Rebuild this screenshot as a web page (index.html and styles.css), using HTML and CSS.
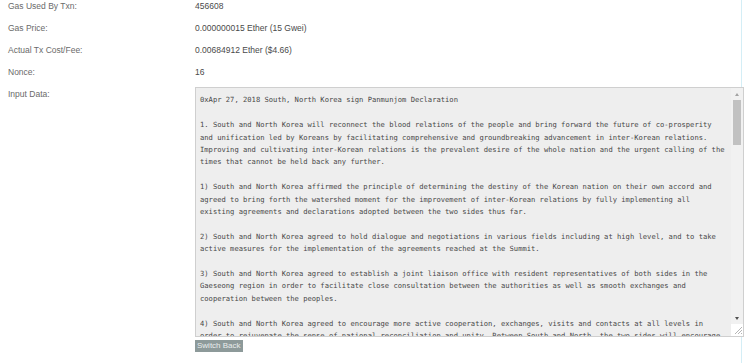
FILE: index.html
```html
<!DOCTYPE html>
<html lang="en">
<head>
    <meta charset="UTF-8">
    <meta name="viewport" content="width=device-width, initial-scale=1.0">
    <title>Transaction Details</title>
    <link rel="stylesheet" href="styles.css">
</head>
<body>
    <div class="tx-details">
        <div class="tx-row">
            <div class="tx-label">Gas Used By Txn:</div>
            <div class="tx-value">456608</div>
        </div>
        <div class="tx-row">
            <div class="tx-label">Gas Price:</div>
            <div class="tx-value">0.000000015 Ether (15 Gwei)</div>
        </div>
        <div class="tx-row">
            <div class="tx-label">Actual Tx Cost/Fee:</div>
            <div class="tx-value">0.00684912 Ether ($4.66)</div>
        </div>
        <div class="tx-row">
            <div class="tx-label">Nonce:</div>
            <div class="tx-value">16</div>
        </div>
        <div class="tx-row">
            <div class="tx-label">Input Data:</div>
            <div class="tx-value">
                <div class="input-box">
<pre class="input-text">0xApr 27, 2018 South, North Korea sign Panmunjom Declaration

1. South and North Korea will reconnect the blood relations of the people and bring forward the future of co-prosperity
and unification led by Koreans by facilitating comprehensive and groundbreaking advancement in inter-Korean relations.
Improving and cultivating inter-Korean relations is the prevalent desire of the whole nation and the urgent calling of the
times that cannot be held back any further.

1) South and North Korea affirmed the principle of determining the destiny of the Korean nation on their own accord and
agreed to bring forth the watershed moment for the improvement of inter-Korean relations by fully implementing all
existing agreements and declarations adopted between the two sides thus far.

2) South and North Korea agreed to hold dialogue and negotiations in various fields including at high level, and to take
active measures for the implementation of the agreements reached at the Summit.

3) South and North Korea agreed to establish a joint liaison office with resident representatives of both sides in the
Gaeseong region in order to facilitate close consultation between the authorities as well as smooth exchanges and
cooperation between the peoples.

4) South and North Korea agreed to encourage more active cooperation, exchanges, visits and contacts at all levels in
order to rejuvenate the sense of national reconciliation and unity. Between South and North, the two sides will encourage</pre>
                    <div class="scrollbar">
                        <span class="scroll-arrow up"></span>
                        <span class="scroll-thumb"></span>
                        <span class="scroll-track"></span>
                        <span class="scroll-arrow down"></span>
                        <span class="resizer">
                            <svg width="12" height="11" viewBox="0 0 12 11">
                                <path d="M4 10 L11 3 M7 10 L11 6 M10 10 L11 9" stroke="#b5b5b5" stroke-width="1" fill="none"/>
                            </svg>
                        </span>
                    </div>
                </div>
                <button type="button" class="switch-button">Switch Back</button>
            </div>
        </div>
    </div>
</body>
</html>
```

FILE: styles.css
```css
* {
    box-sizing: border-box;
    margin: 0;
    padding: 0;
}

body {
    font-family: 'Liberation Sans', Arial, sans-serif;
    font-size: 8.5px;
    background-color: #fff;
    color: #555;
    min-height: 363px;
}

.tx-details {
    width: 742px;
    min-height: 363px;
    padding-left: 8px;
    border-right: 1px solid #d4eef6;
}

.tx-row {
    display: grid;
    grid-template-columns: 187px 1fr;
    line-height: 12px;
    margin-bottom: 10.1px;
}

.tx-label {
    color: #6a6a6a;
}

.tx-value {
    color: #4a4a4a;
}

.input-box {
    display: flex;
    width: 549px;
    height: 250px;
    margin-top: -1px;
    background-color: #eeeeee;
    border: 1px solid #cfcfcf;
    overflow: hidden;
}

.input-text {
    flex: 1;
    overflow: hidden;
    padding: 6px 0 0 4px;
    font-family: 'DejaVu Sans Mono', 'Liberation Mono', monospace;
    font-size: 7.15px;
    line-height: 12.4px;
    color: #484848;
    white-space: pre;
}

.scrollbar {
    display: flex;
    flex-direction: column;
    align-items: center;
    width: 12px;
    background-color: #f1f1f1;
}

.scroll-arrow {
    display: flex;
    justify-content: center;
    align-items: center;
    width: 12px;
    height: 12px;
}

.scroll-arrow::before {
    content: '';
    border-left: 2.5px solid transparent;
    border-right: 2.5px solid transparent;
}

.scroll-arrow.up::before {
    border-bottom: 3px solid #a3a3a3;
}

.scroll-arrow.down::before {
    border-top: 3px solid #505050;
}

.scroll-thumb {
    width: 8px;
    height: 45px;
    margin-right: 1px;
    background-color: #c1c1c1;
}

.scroll-track {
    flex: 1;
}

.resizer {
    display: block;
    width: 12px;
    height: 12px;
    background-color: #fff;
}

.resizer svg {
    display: block;
}

.switch-button {
    display: block;
    margin-top: 3px;
    height: 12px;
    padding: 0 2px;
    border: none;
    background-color: #8d9a9a;
    color: #e9eded;
    font-family: 'Liberation Sans', Arial, sans-serif;
    font-size: 8px;
    line-height: 12px;
}
```
